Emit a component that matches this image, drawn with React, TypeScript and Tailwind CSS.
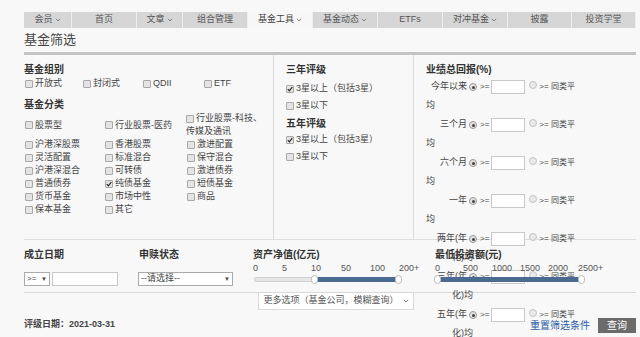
import React from 'react';

const font = "font-['Liberation_Sans','Noto_Sans_CJK_SC',sans-serif]";

const tabs = [
  { label: '会员', w: 'w-[48px]', drop: true },
  { label: '首页', w: 'w-[65px]' },
  { label: '文章', w: 'w-[46px]', drop: true },
  { label: '组合管理', w: 'w-[65px]' },
  { label: '基金工具', w: 'w-[65px]', drop: true, active: true },
  { label: '基金动态', w: 'w-[65px]', drop: true },
  { label: 'ETFs', w: 'w-[65px]' },
  { label: '对冲基金', w: 'w-[65px]', drop: true },
  { label: '披露', w: 'w-[64px]' },
  { label: '投资学堂', w: 'w-[64px]' },
];

const fundTypes: { label: React.ReactNode; checked?: boolean }[] = [
  { label: '股票型' },
  { label: '行业股票-医药' },
  { label: '行业股票-科技、传媒及通讯' },
  { label: '沪港深股票' },
  { label: '香港股票' },
  { label: '激进配置' },
  { label: '灵活配置' },
  { label: '标准混合' },
  { label: '保守混合' },
  { label: '沪港深混合' },
  { label: '可转债' },
  { label: '激进债券' },
  { label: '普通债券' },
  { label: '纯债基金', checked: true },
  { label: '短债基金' },
  { label: '货币基金' },
  { label: '市场中性' },
  { label: '商品' },
  { label: '保本基金' },
  { label: '其它' },
];

const perfRows = [
  { label: '今年以来', rest: '均', indent: false },
  { label: '三个月', rest: '均', indent: false },
  { label: '六个月', rest: '均', indent: false },
  { label: '一年', rest: '均', indent: false },
  { label: '两年(年', rest: '化)均', indent: true },
  { label: '三年(年', rest: '化)均', indent: true },
  { label: '五年(年', rest: '化)均', indent: true },
];

const Chevron = () => (
  <svg width="6" height="4" viewBox="0 0 6 4" className="shrink-0">
    <path d="M0.8 0.8 L3 3 L5.2 0.8" fill="none" stroke="#777" strokeWidth="0.9" />
  </svg>
);

const Box = ({ checked }: { checked?: boolean }) => (
  <span className="mr-[2px] inline-flex h-[8px] w-[8px] shrink-0 items-center justify-center rounded-[1px] border border-[#a8a8a8] bg-[#e4e4e4]">
    {checked && (
      <svg width="6" height="6" viewBox="0 0 6 6">
        <path d="M0.8 3.2 L2.4 4.8 L5.3 1" fill="none" stroke="#222" strokeWidth="1.2" />
      </svg>
    )}
  </span>
);

const Radio = ({ on }: { on?: boolean }) => (
  <span
    className={`inline-flex h-[8px] w-[8px] shrink-0 items-center justify-center rounded-full border ${
      on ? 'border-[#9a9a9a] bg-[#e2e2e2]' : 'border-[#c4c4c4] bg-[#e9e9e9]'
    }`}
  >
    {on && <span className="h-[3px] w-[3px] rounded-full bg-[#444]" />}
  </span>
);

const Slider = ({
  ticks,
  fillFrom,
  fillTo,
}: {
  ticks: { t: string; x: number }[];
  fillFrom: number;
  fillTo: number;
}) => (
  <div className="relative mt-[2px] h-[26px] w-[170px]">
    {ticks.map((k) => (
      <span key={k.t} className="absolute top-0 text-[9px] leading-[10px] text-[#555]" style={{ left: k.x }}>
        {k.t}
      </span>
    ))}
    <div className="absolute top-[14px] left-[1px] h-[5px] w-[146px] rounded-[2px] border border-[#d0d0d0] bg-[#e6e6e6]" />
    <div
      className="absolute top-[14px] h-[5px] bg-[#4a6a91]"
      style={{ left: fillFrom, width: fillTo - fillFrom }}
    />
    <span className="absolute top-[12px] h-[9px] w-[7px] rounded-full border border-[#bbb] bg-white" style={{ left: fillFrom - 4 }} />
    <span className="absolute top-[12px] h-[9px] w-[7px] rounded-full border border-[#bbb] bg-white" style={{ left: fillTo - 3 }} />
  </div>
);

export default function App() {
  return (
    <div className={`h-[337px] w-[640px] overflow-hidden bg-[#f8f8f8] px-[24px] pt-[12px] text-[#444] ${font}`}>
      {/* Top navigation */}
      <nav className="flex h-[16px] w-[612px] bg-[#d6d6d6]">
        {tabs.map((t) => (
          <div
            key={t.label}
            className={`${t.w} flex items-center justify-center gap-[2px] border-r border-[#ededed] text-[9px] ${
              t.active ? 'bg-[#f7f7f7] text-[#444]' : 'text-[#555]'
            }`}
          >
            <span>{t.label}</span>
            {t.drop && <Chevron />}
          </div>
        ))}
      </nav>

      {/* Title */}
      <div className="flex h-[24px] items-center text-[13px] text-[#444]">基金筛选</div>
      <div className="h-[3px] w-[612px] bg-[#c4c4c4]" />

      {/* Filter panel */}
      <div className="flex h-[185px] w-[612px] border-b border-[#dedede]">
        {/* Fund group / category */}
        <div className="w-[250px] border-r border-[#dcdcdc] pt-[8px]">
          <div className="h-[14px] text-[10px] leading-[14px] font-bold text-[#333]">基金组别</div>
          <div className="flex h-[14px] items-center text-[9px]">
            <label className="flex w-[59px] items-center pl-[1px]"><Box />开放式</label>
            <label className="flex w-[60px] items-center"><Box />封闭式</label>
            <label className="flex w-[61px] items-center"><Box />QDII</label>
            <label className="flex items-center"><Box />ETF</label>
          </div>
          <div className="mt-[7px] h-[14px] text-[10px] leading-[14px] font-bold text-[#333]">基金分类</div>
          <div className="grid grid-cols-[80px_82px_1fr] auto-rows-[13px] text-[9px] leading-[13px]">
            {fundTypes.map((f, i) =>
              i === 2 ? (
                <label key={i} className="row-span-2 flex flex-col justify-center">
                  <span className="flex items-center"><Box />行业股票-科技、</span>
                  <span>传媒及通讯</span>
                </label>
              ) : (
                <label key={i} className={`flex items-center pl-[1px] ${i < 2 ? 'row-span-2' : ''}`}>
                  <Box checked={f.checked} />
                  {f.label}
                </label>
              )
            )}
          </div>
        </div>

        {/* Ratings */}
        <div className="w-[140px] border-r border-[#dcdcdc] pt-[8px] pl-[12px] text-[9px]">
          <div className="h-[14px] text-[10px] leading-[14px] font-bold text-[#333]">三年评级</div>
          <label className="mt-[3px] flex h-[17px] items-center"><Box checked />3星以上（包括3星）</label>
          <label className="flex h-[17px] items-center"><Box />3星以下</label>
          <div className="mt-[3px] h-[14px] text-[10px] leading-[14px] font-bold text-[#333]">五年评级</div>
          <label className="flex h-[17px] items-center"><Box checked />3星以上（包括3星）</label>
          <label className="flex h-[17px] items-center"><Box />3星以下</label>
        </div>

        {/* Performance */}
        <div className="flex-1 pt-[8px] pl-[12px] text-[9px]">
          <div className="h-[14px] text-[10px] leading-[14px] font-bold text-[#333]">业绩总回报(%)</div>
          {perfRows.map((r) => (
            <div key={r.label}>
              <div className="flex h-[19px] w-[160px] items-center">
                <span className="w-[41px] text-right">{r.label}</span>
                <span className="ml-[2px]"><Radio on /></span>
                <span className="ml-[3px] text-[8px]">&gt;=</span>
                <span className="ml-[2px] inline-block h-[14px] w-[34px] border border-[#c8c8c8] bg-white" />
                <span className="ml-[4px]"><Radio /></span>
                <span className="ml-[2px] text-[8px]">&gt;= 同类平</span>
              </div>
              <div className={`flex h-[19px] items-center ${r.indent ? 'pl-[26px]' : ''}`}>{r.rest}</div>
            </div>
          ))}
        </div>
      </div>

      {/* Lower filters */}
      <div className="flex h-[52px] w-[612px] text-[9px]">
        <div className="w-[115px] pt-[9px]">
          <div className="h-[12px] text-[10px] leading-[12px] font-bold text-[#333]">成立日期</div>
          <div className="mt-[11px] flex items-center gap-[2px]">
            <span className="flex h-[14px] w-[26px] items-center justify-between border border-[#aaa] bg-white px-[2px] text-[8px]">
              &gt;= <span className="text-[6px]">▼</span>
            </span>
            <span className="h-[14px] w-[66px] border border-[#c8c8c8] bg-white" />
          </div>
        </div>
        <div className="w-[114px] pt-[9px]">
          <div className="h-[12px] text-[10px] leading-[12px] font-bold text-[#333]">申赎状态</div>
          <div className="mt-[11px] -ml-px flex h-[14px] w-[95px] items-center justify-between border border-[#aaa] bg-white px-[2px]">
            <span>--请选择--</span>
            <span className="text-[6px]">▼</span>
          </div>
        </div>
        <div className="w-[182px] pt-[9px]">
          <div className="h-[12px] text-[10px] leading-[12px] font-bold text-[#333]">资产净值(亿元)</div>
          <Slider
            ticks={[
              { t: '0', x: 0 },
              { t: '5', x: 29 },
              { t: '10', x: 58 },
              { t: '50', x: 88 },
              { t: '100', x: 117 },
              { t: '200+', x: 146 },
            ]}
            fillFrom={62}
            fillTo={145}
          />
        </div>
        <div className="flex-1 pt-[9px]">
          <div className="h-[12px] text-[10px] leading-[12px] font-bold text-[#333]">最低投资额(元)</div>
          <Slider
            ticks={[
              { t: '0', x: 0 },
              { t: '500', x: 28 },
              { t: '1000', x: 57 },
              { t: '1500', x: 85 },
              { t: '2000', x: 113 },
              { t: '2500+', x: 143 },
            ]}
            fillFrom={3}
            fillTo={146}
          />
        </div>
      </div>

      {/* More options */}
      <div className="h-[17px] w-[612px] border-t border-[#d8d8d8]">
        <div className="ml-[234px] flex h-[17px] w-[156px] items-center justify-center gap-[4px] border-x border-b border-[#dadada] bg-white text-[9px] text-[#555]">
          <span>更多选项（基金公司，模糊查询）</span>
          <Chevron />
        </div>
      </div>

      {/* Footer */}
      <div className="mt-[8px] flex h-[16px] w-[612px] items-center justify-between">
        <span className="text-[9px] font-bold text-[#444]">评级日期：2021-03-31</span>
        <div className="flex items-center">
          <span className="mr-[8px] text-[10px] text-[#2a5ca6]">重置筛选条件</span>
          <button className="h-[15px] w-[38px] bg-[#6b6b6b] text-[10px] text-white">查询</button>
        </div>
      </div>
    </div>
  );
}
